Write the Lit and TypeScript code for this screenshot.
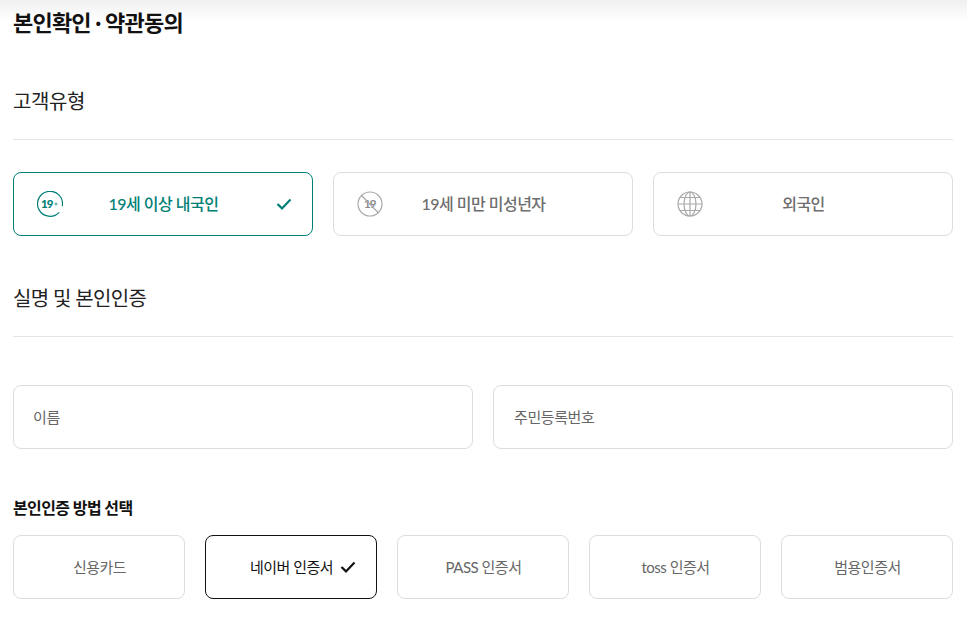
import { LitElement, html, css } from "lit";
import { customElement } from "lit/decorators.js";

const check = (color: string) => html`<svg class="check" width="16" height="14" viewBox="0 0 16 14" fill="none"><path d="M1.5 7 L6 11.4 L14.5 2.6" stroke=${color} stroke-width="2.2"/></svg>`;

@customElement("app-root")
export class AppRoot extends LitElement {
  static styles = css`
    :host { display: block; width: 967px; height: 619px; overflow: hidden; background: #fff; font-family: Lato, "Noto Sans CJK KR", sans-serif; color: #111; }
    .page { box-sizing: border-box; height: 619px; padding: 0 14px 0 13px; background: linear-gradient(#f0f0f0 0, #fff 22px) no-repeat; display: flex; flex-direction: column; }
    h1 { margin: 0; height: 46px; line-height: 46px; font-size: 22px; font-weight: 700; letter-spacing: -0.8px; color: #111; }
    .section-title { margin: 0; height: 94px; box-sizing: border-box; border-bottom: 1px solid #e5e5e5; padding-top: 41px; line-height: 28px; font-size: 20px; font-weight: 400; letter-spacing: -0.4px; color: #222; }
    .types { display: grid; grid-template-columns: repeat(3, 300px); gap: 20px; margin-top: 32px; }
    .card { position: relative; box-sizing: border-box; height: 64px; border: 1px solid #ddd; border-radius: 8px; padding: 0 0 2px 1px; display: flex; align-items: center; justify-content: center; font-size: 16px; font-weight: 500; letter-spacing: -0.5px; color: #6e6e6e; }
    .card.active { border-color: #007f77; color: #007f77; }
    .card .icon { position: absolute; left: 23px; top: 18px; }
    .card .check { position: absolute; right: 20px; top: 24px; }
    .second { height: 101px; padding-top: 48px; letter-spacing: -0.65px; }
    .fields { display: grid; grid-template-columns: repeat(2, 460px); gap: 20px; margin-top: 48px; }
    .field { box-sizing: border-box; height: 64px; border: 1px solid #ddd; border-radius: 8px; padding: 0 20px 2px; display: flex; align-items: center; font-size: 15px; letter-spacing: -0.4px; color: #666; }
    .field.name { padding-left: 19px; }
    .label { margin: 48px 0 0; height: 38px; line-height: 22px; font-size: 16px; font-weight: 700; letter-spacing: -0.6px; color: #111; }
    .methods { display: grid; grid-template-columns: repeat(5, 172px); gap: 20px; }
    .method { position: relative; box-sizing: border-box; height: 64px; border: 1px solid #ddd; border-radius: 8px; padding: 0 0 2px 1px; display: flex; align-items: center; justify-content: center; font-size: 15px; letter-spacing: -0.5px; color: #666; }
    .method.active { border-color: #111; color: #111; }
    .method .check { position: absolute; right: 20px; top: 24px; }
  `;

  render() {
    return html`<div class="page">
      <h1>본인확인 · 약관동의</h1>
      <h2 class="section-title">고객유형</h2>
      <div class="types">
        <div class="card active">
          <svg class="icon" width="26" height="26" viewBox="0 0 26 26" fill="none">
            <path d="M25.3 15.2 A12.5 12.5 0 1 0 22.2 21.3" stroke="#007f77" stroke-width="1.2"/>
            <text x="4" y="17" font-size="11.5" font-weight="900" fill="#007f77" font-family="Lato" letter-spacing="-1">19</text>
            <circle cx="19" cy="13" r="1.5" fill="#6fb3ae"/>
          </svg>
          19세 이상 내국인
          ${check("#007f77")}
        </div>
        <div class="card">
          <svg class="icon" width="26" height="26" viewBox="0 0 26 26" fill="none">
            <circle cx="13" cy="13" r="12" stroke="#aaa" stroke-width="1.2"/>
            <text x="7" y="17.2" font-size="11.5" font-weight="700" fill="#888" font-family="Lato" letter-spacing="-1">19</text>
            <path d="M4.5 4.5 L21.5 22" stroke="#aaa" stroke-width="1.2"/>
          </svg>
          19세 미만 미성년자
        </div>
        <div class="card">
          <svg class="icon" width="26" height="26" viewBox="0 0 26 26" fill="none" stroke="#aaa" stroke-width="1.2">
            <circle cx="13" cy="13" r="12"/>
            <ellipse cx="13" cy="13" rx="6" ry="12"/>
            <path d="M13 1 V25 M1 13 H25 M3 6.5 H23 M3 19.5 H23"/>
          </svg>
          외국인
        </div>
      </div>
      <h2 class="section-title second">실명 및 본인인증</h2>
      <div class="fields">
        <div class="field name">이름</div>
        <div class="field">주민등록번호</div>
      </div>
      <p class="label">본인인증 방법 선택</p>
      <div class="methods">
        <div class="method">신용카드</div>
        <div class="method active">네이버 인증서 ${check("#111")}</div>
        <div class="method">PASS 인증서</div>
        <div class="method">toss 인증서</div>
        <div class="method">범용인증서</div>
      </div>
    </div>`;
  }
}
